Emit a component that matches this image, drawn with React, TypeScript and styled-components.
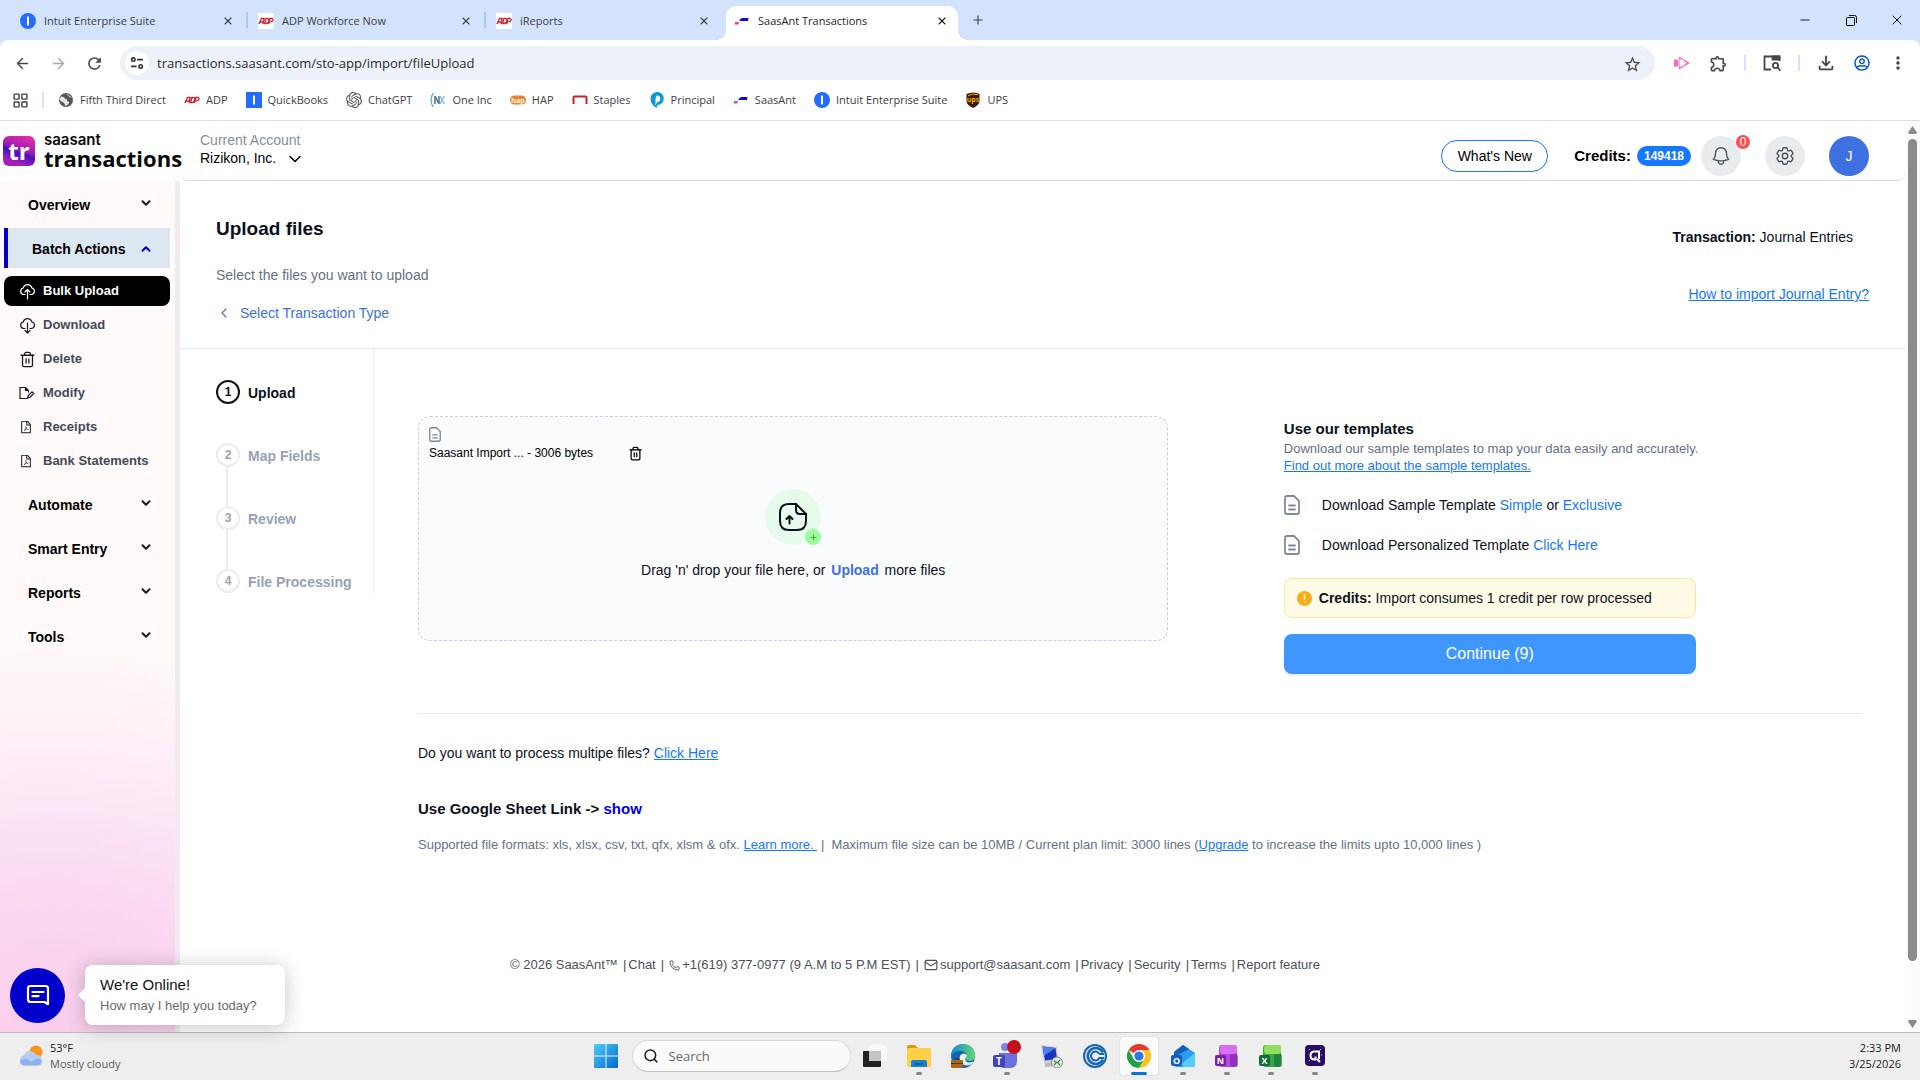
import React from "react";
import styled, { createGlobalStyle, css } from "styled-components";
import {
  ArrowLeft, ArrowRight, ChevronDown, ChevronUp, ChevronLeft, LayoutGrid,
  Mail, Minus, Phone, Plus, Search, Trash2, X,
} from "lucide-react";
import { HiOutlineBell, HiOutlineCog6Tooth } from "react-icons/hi2";
import {
  MdStarBorder, MdOutlineExtension, MdOutlineFileDownload, MdMoreVert, MdRefresh,
} from "react-icons/md";
import { AiOutlineFilePdf } from "react-icons/ai";
import { FaRegUserCircle } from "react-icons/fa";
import { SiOpenai } from "react-icons/si";

const ui = `"Open Sans", "Noto Sans", sans-serif`;
const sans = `"Liberation Sans", Arial, sans-serif`;

const Global = createGlobalStyle`
  * { box-sizing: border-box; }
  body { margin: 0; background: #fff; font-family: ${sans}; font-size: 14px; line-height: 20px; color: #0c111b; }
  button, input, select { font: inherit; color: inherit; margin: 0; padding: 0; border: 0; background: none; }
  button { cursor: pointer; }
  a { color: inherit; text-decoration: none; }
  svg { display: block; flex: none; }
  h1, h2, p, ul, ol { margin: 0; padding: 0; }
  ul, ol { list-style: none; }
`;

const Screen = styled.div`
  display: flex;
  flex-direction: column;
  min-height: 100vh;
`;

/* ---------- browser window ---------- */

const Browser = styled.header`
  font-family: ${ui};
  font-size: 11px;
  background: #d3e2fd;
  color: #3c4043;
`;
const TabStrip = styled.div`
  display: flex;
  align-items: flex-end;
  height: 40px;
  padding-left: 12px;
`;
const Tab = styled.div<{ $active?: boolean; $divider?: boolean }>`
  position: relative;
  display: flex;
  align-items: center;
  gap: 8px;
  width: 232px;
  height: 34px;
  padding: 0 8px 5px;
  margin-right: 6px;
  ${(p) => p.$divider && css`
    &::after { content: ""; position: absolute; right: -4px; top: 6px; width: 2px; height: 16px; background: #a8c7fa; }
  `}
  ${(p) => p.$active && css`
    background: #fff;
    color: #1f1f1f;
    border-radius: 10px 10px 0 0;
    &::before, &::after { content: ""; position: absolute; bottom: 0; width: 10px; height: 10px; }
    &::before { left: -10px; background: radial-gradient(circle at 0 0, transparent 10px, #fff 10px); }
    &::after { right: -10px; background: radial-gradient(circle at 100% 0, transparent 10px, #fff 10px); }
  `}
`;
const TabLabel = styled.button`
  display: flex;
  align-items: center;
  gap: 8px;
  flex: 1;
  text-align: left;
`;
const IconButton = styled.button`
  display: grid;
  place-items: center;
  width: 16px;
  height: 16px;
  color: inherit;
`;
const NewTab = styled(IconButton)`
  width: 28px;
  height: 34px;
  padding-bottom: 6px;
`;
const WindowButtons = styled.div`
  display: flex;
  margin-left: auto;
  color: #000;
  button { width: 46px; height: 40px; }
`;
const Toolbar = styled.div`
  display: flex;
  align-items: center;
  height: 40px;
  padding: 6px 4px 0 4px;
  background: #fff;
  border-radius: 8px 8px 0 0;
  color: #474747;
`;
const ToolButton = styled.button<{ $dim?: boolean }>`
  display: grid;
  place-items: center;
  width: 36px;
  height: 34px;
  color: ${(p) => (p.$dim ? "#a9a9a9" : "inherit")};
`;
const AddressBar = styled.div`
  display: flex;
  align-items: center;
  gap: 8px;
  flex: 1;
  height: 34px;
  margin: 0 9px 0 8px;
  padding: 0 16px 0 5px;
  border-radius: 17px;
  background: #edf1fa;
`;
const SiteInfo = styled.button`
  display: grid;
  place-items: center;
  width: 24px;
  height: 24px;
  border-radius: 12px;
  background: #fff;
`;
const Address = styled.input`
  flex: 1;
  font-size: 13px;
  color: #2b2b2b;
  outline: none;
`;
const Split = styled.span<{ $gap?: number }>`
  width: 2px;
  height: 16px;
  margin: 0 ${(p) => p.$gap ?? 8}px;
  background: #d3e2fd;
`;
const Bookmarks = styled.nav`
  display: flex;
  align-items: center;
  height: 41px;
  padding-left: 12px;
  background: #fff;
  border-bottom: 1px solid #dfdfdf;
`;
const BookmarkList = styled.ul`
  display: flex;
  gap: 18px;
  a { display: flex; align-items: center; gap: 6px; }
`;

/* ---------- app frame ---------- */

const Viewport = styled.div`
  position: relative;
  display: flex;
  flex: 1;
`;
const Frame = styled.div`
  display: grid;
  grid-template-columns: 180px 1fr;
  grid-template-rows: 60px 1fr;
  flex: 1;
`;
const Brand = styled.a`
  display: flex;
  align-items: center;
  gap: 9px;
  padding-left: 3px;
`;
const BrandMark = styled.span`
  display: grid;
  place-items: center;
  flex: none;
  width: 32px;
  height: 30px;
  border-radius: 6px;
  background: linear-gradient(200deg, #e72bb0 5%, #9a1fb0 45%, #4310c0 55%, #a420b8 80%);
  color: #fff;
  font: 700 24px/24px ${ui};
`;
const BrandText = styled.span`
  display: flex;
  flex-direction: column;
  font: 700 22px/22px ${ui};
  color: #0a0a0a;
`;
const BrandTop = styled.span`
  font: 600 15px/14px "Inter", sans-serif;
`;
const TopBar = styled.header`
  display: flex;
  align-items: center;
  padding: 0 36px 0 20px;
  border-bottom: 1px solid #d8dadd;
  border-radius: 0 0 8px 8px;
`;
const Account = styled.label`
  display: flex;
  flex-direction: column;
  align-items: flex-start;
  padding-bottom: 3px;
  line-height: 18px;
  color: #868e9a;
`;
const AccountPicker = styled.span`
  display: flex;
  position: relative;
  color: #000;
  select { appearance: none; padding-right: 28px; outline: none; }
  svg { position: absolute; right: 0; top: 0; pointer-events: none; }
`;
const TopActions = styled.div`
  display: flex;
  align-items: center;
  margin-left: auto;
  padding-top: 10px;
`;
const WhatsNew = styled.button`
  width: 107px;
  height: 32px;
  margin-right: 26px;
  border: 1px solid #1677ff;
  border-radius: 16px;
  color: #000;
`;
const CreditLabel = styled.strong`
  font-size: 15px;
  color: #000;
`;
const CreditPill = styled.span`
  margin: 0 10px 0 6px;
  padding: 0 7px;
  border-radius: 10px;
  background: #1677ff;
  color: #fff;
  font-size: 12px;
  font-weight: 700;
`;
const RoundButton = styled.button<{ $avatar?: boolean }>`
  position: relative;
  display: grid;
  place-items: center;
  width: 40px;
  height: 40px;
  border-radius: 20px;
  background: ${(p) => (p.$avatar ? "#3d70e0" : "#e9ecef")};
  color: ${(p) => (p.$avatar ? "#fff" : "#49515c")};
  & + & { margin-left: 24px; }
`;
const Badge = styled.span`
  position: absolute;
  right: -9px;
  top: -1px;
  width: 14px;
  height: 14px;
  border-radius: 7px;
  background: #ff4d4f;
  color: #fff;
  font-size: 12px;
  line-height: 14px;
`;

/* ---------- side navigation ---------- */

const Sidebar = styled.nav`
  display: flex;
  flex-direction: column;
  padding: 1px 5px 0 4px;
  border-right: 5px solid #f3ebf3;
  background: radial-gradient(ellipse 300% 45% at 30% 100%, #f9cdec 0%, #fad8f0 35%, #fdeef7 75%, #fff9f9 100%) #fff9f9;
`;
const Group = styled.button<{ $open?: boolean }>`
  display: flex;
  align-items: center;
  justify-content: space-between;
  height: 40px;
  margin: 2px 0;
  padding: 2px 17px 0 24px;
  font-weight: 700;
  color: #000;
  svg { margin-bottom: 4px; color: #1d1d1d; }
  ${(p) => p.$open && css`
    border-left: 4px solid #0000c8;
    background: #dde7f1;
    svg { margin-bottom: 0; color: #0000c8; }
  `}
`;
const SubMenu = styled.ul`
  display: flex;
  flex-direction: column;
  gap: 4px;
  padding: 6px 0;
`;
const SubLink = styled.a<{ $current?: boolean }>`
  display: flex;
  align-items: center;
  gap: 7px;
  height: 30px;
  padding-left: 15px;
  border-radius: 8px;
  font-size: 13px;
  font-weight: 700;
  color: ${(p) => (p.$current ? "#fff" : "#434a57")};
  background: ${(p) => (p.$current ? "#000" : "none")};
  span { width: 17px; color: ${(p) => (p.$current ? "#fff" : "#16181d")}; }
`;

/* ---------- page ---------- */

const Page = styled.main`
  min-width: 0;
`;
const PageHead = styled.section`
  display: flex;
  justify-content: space-between;
  padding: 34px 36px 25px;
  border-bottom: 1px solid #e9edf1;
`;
const HeadSide = styled.div`
  display: flex;
  flex-direction: column;
  align-items: flex-end;
  gap: 37px;
  padding-top: 12px;
  p { padding-right: 16px; }
`;
const Title = styled.h1`
  font-size: 19px;
  line-height: 28px;
`;
const Muted = styled.p`
  margin: 22px 0 18px;
  color: #667085;
`;
const BackLink = styled.a`
  display: flex;
  align-items: center;
  gap: 8px;
  color: #3d70e0;
`;
const Link = styled.a<{ $plain?: boolean }>`
  color: #1677ff;
  text-decoration: ${(p) => (p.$plain ? "none" : "underline")};
`;
const Work = styled.div`
  display: flex;
  align-items: flex-start;
  padding-right: 44px;
`;
const Steps = styled.ol`
  width: 194px;
  flex: none;
  padding: 31px 0 0 36px;
  border-right: 1px solid #e9edf1;
`;
const Step = styled.li<{ $active?: boolean }>`
  display: flex;
  gap: 8px;
  position: relative;
  height: 24px;
  line-height: 26px;
  font-weight: 700;
  color: ${(p) => (p.$active ? "#0c111b" : "#98a2b3")};
  & + & { margin-top: 39px; }
  & + &::before {
    content: ""; position: absolute; left: 10px; top: -39px; width: 2px; height: 39px; background: #e9edf1;
  }
`;
const StepDot = styled.span<{ $active?: boolean }>`
  width: 24px;
  height: 24px;
  border: 2px solid ${(p) => (p.$active ? "#0c111b" : "#e9edf1")};
  border-radius: 12px;
  font-size: 12px;
  line-height: 20px;
  text-align: center;
`;
const Content = styled.div`
  flex: 1;
  min-width: 0;
  padding: 67px 0 0 44px;
`;
const Columns = styled.div`
  display: grid;
  grid-template-columns: 52% 412px;
  column-gap: 8%;
  align-items: start;
  padding-bottom: 39px;
  border-bottom: 1px solid #e9e9eb;
`;
const DropZone = styled.section`
  height: 225px;
  padding: 10px;
  border: 1px dashed #c9d1db;
  border-radius: 12px;
  background: #fafbfd;
`;
const FileRow = styled.div`
  display: flex;
  align-items: center;
  gap: 34px;
  margin-top: 2px;
  font-size: 12px;
  line-height: 18px;
  color: #000;
`;
const DropBody = styled.div`
  display: flex;
  flex-direction: column;
  align-items: center;
  gap: 15px;
  margin-top: 27px;
`;
const DropIcon = styled.span`
  position: relative;
  display: grid;
  place-items: center;
  width: 56px;
  height: 56px;
  border-radius: 28px;
  background: #e6fbe9;
`;
const PlusBadge = styled.span`
  position: absolute;
  right: 0;
  bottom: 0;
  display: grid;
  place-items: center;
  width: 16px;
  height: 16px;
  border-radius: 8px;
  background: #9dfb9f;
  color: #3f8a46;
`;
const UploadButton = styled.button`
  margin: 0 2px;
  font-weight: 700;
  color: #3d70e0;
`;
const Aside = styled.aside`
  padding-top: 2px;
`;
const AsideTitle = styled.h2`
  font-size: 15px;
  line-height: 22px;
`;
const AsideText = styled.p`
  margin-bottom: 21px;
  font-size: 13px;
  line-height: 17px;
  white-space: nowrap;
  color: #667085;
`;
const Template = styled.p`
  display: flex;
  gap: 22px;
  height: 20px;
  margin-bottom: 20px;
`;
const Notice = styled.p`
  display: flex;
  align-items: center;
  gap: 7px;
  height: 40px;
  margin: 23px 0 16px;
  padding-left: 12px;
  border: 1px solid #ffe58f;
  border-radius: 8px;
  background: #fffbe6;
`;
const Continue = styled.button`
  width: 100%;
  height: 40px;
  border-radius: 8px;
  background: #4096ff;
  box-shadow: 0 2px 0 rgba(5, 145, 255, 0.1);
  color: #fff;
  font-size: 16px;
`;
const Multi = styled.p`
  margin: 29px 0 35px;
`;
const SheetTitle = styled.h2`
  font-size: 15px;
  line-height: 22px;
  button { color: #0000ee; font-weight: 700; }
`;
const Limits = styled.p`
  margin-top: 15px;
  font-size: 13px;
  color: #667085;
  white-space: pre-wrap;
`;
const Footer = styled.footer`
  display: flex;
  gap: 5px;
  padding: 100px 0 0 330px;
  font-size: 13px;
  color: #4b5157;
  a, span { display: flex; align-items: center; gap: 2px; }
`;

/* ---------- scroll bar, chat, task bar ---------- */

const ScrollTrack = styled.div`
  display: flex;
  flex-direction: column;
  align-items: center;
  gap: 5px;
  width: 15px;
  padding: 5px 0 4px;
  background: #fcfcfc;
  color: #8b8b8b;
`;
const Thumb = styled.span`
  flex: 0 0 822px;
  width: 9px;
  margin-bottom: auto;
  border-radius: 5px;
  background: #8b8b8b;
`;
const Chat = styled.div`
  position: absolute;
  left: 10px;
  bottom: 7px;
  display: flex;
  align-items: center;
  gap: 20px;
`;
const ChatButton = styled.button`
  display: grid;
  place-items: center;
  width: 55px;
  height: 55px;
  border-radius: 28px;
  background: #0000cb;
  color: #fff;
`;
const ChatBubble = styled.div`
  position: relative;
  width: 200px;
  height: 60px;
  padding: 9px 15px;
  border-radius: 8px;
  background: #fff;
  box-shadow: 0 2px 20px rgba(0, 0, 0, 0.24);
  font-size: 13px;
  line-height: 21px;
  color: #6b6b6b;
  &::before {
    content: ""; position: absolute; left: -5px; top: 25px; width: 10px; height: 10px;
    background: #fff; transform: rotate(45deg);
  }
  strong { display: block; font-weight: 400; font-size: 15px; color: #111; }
`;
const TaskBar = styled.footer`
  display: grid;
  grid-template-columns: 1fr auto 1fr;
  align-items: center;
  height: 48px;
  padding-bottom: 2px;
  border-top: 1px solid #bcbcbc;
  background: #eee;
  font: 11px/16px ${ui};
  color: #1b1b1b;
`;
const Weather = styled.button`
  display: flex;
  align-items: center;
  gap: 7px;
  padding-left: 19px;
  text-align: left;
  small { display: block; font-size: 11px; color: #5c5c5c; }
`;
const Clock = styled.time`
  padding-right: 19px;
  text-align: right;
`;
const Tray = styled.div`
  display: flex;
  align-items: center;
`;
const Task = styled.button<{ $mark?: "idle" | "active" }>`
  position: relative;
  display: grid;
  place-items: center;
  width: 38px;
  height: 38px;
  margin: 0 3px;
  border-radius: 4px;
  ${(p) => p.$mark === "active" && css`background: #fafafa; box-shadow: 0 0 0 1px #e3e3e3;`}
  ${(p) => p.$mark && css`
    &::after {
      content: ""; position: absolute; bottom: 0; height: 3px; border-radius: 2px;
      width: ${p.$mark === "active" ? 16 : 6}px;
      background: ${p.$mark === "active" ? "#0078d4" : "#868686"};
    }
  `}
`;
const SearchBox = styled.label`
  display: flex;
  align-items: center;
  gap: 10px;
  width: 219px;
  height: 32px;
  margin: 0 2px 0 4px;
  padding-left: 10px;
  border: 1px solid #dadada;
  border-bottom-color: #c2c2c2;
  border-radius: 16px;
  background: #fafafa;
  input { width: 150px; font-size: 13px; outline: none; }
  input::placeholder { color: #666; opacity: 1; }
`;

/* ---------- small drawings ---------- */

const IntuitIcon = ({ square }: { square?: boolean }) => (
  <svg width="16" height="16" viewBox="0 0 16 16">
    <rect width="16" height="16" rx={square ? 0 : 8} fill="#236cff" />
    <rect x="7" y="3.500" width="2" height="9" fill="#fff" />
  </svg>
);
const AdpIcon = () => (
  <svg width="16" height="16" viewBox="0 0 16 16">
    <rect width="16" height="16" fill="#fff" />
    <g fill="none" stroke="#d0202e" strokeWidth="1.300" strokeLinejoin="round">
      <path d="M.8 11 3.500 5.500h2.700L5 11M2.300 9h3" />
      <path d="M6.600 10.500 7.900 5.500h1.300c2.800 0 1.800 5-1.200 5z" />
      <path d="M10.500 11 11.800 5.500h2c2.200 0 1.500 3.300-1 3.300h-1.500" />
    </g>
  </svg>
);
const SaasAntIcon = () => (
  <svg width="16" height="16" viewBox="0 0 16 16">
    <path d="M6 6.500 8 5h6.500L14 8H5.500z" fill="#1209c9" />
    <path d="M1 9h4l-.8 2.500H.8z" fill="#e83fb4" />
  </svg>
);
const GlobeIcon = () => (
  <svg width="16" height="16" viewBox="0 0 16 16">
    <circle cx="8" cy="8" r="7" fill="#55595d" />
    <path d="M3 4.500c2 .5 3 .2 3.500 1.500S9 6.500 9 8.300 11.500 9 11 11 8.500 12.500 8 14c-1.500-.3-1-3-2.500-3.500S1.500 8 1.500 7zM9 1.800c0 1.800 1.700 1.400 2.200 2.700s2 1 2.900 1.200" fill="#fff" opacity=".85" />
  </svg>
);
const OneIncIcon = () => (
  <svg width="16" height="16" viewBox="0 0 16 16" fill="none" strokeWidth="1.500">
    <path d="M3.500 1C.3 5 .3 11 3.500 15" stroke="#6eb5dc" />
    <path d="M5 12V4l4 8V4" stroke="#50708c" />
    <path d="m10 4 4.500 8M14.500 4 10 12" stroke="#8ebcd6" />
  </svg>
);
const HapIcon = () => (
  <svg width="16" height="16" viewBox="0 0 16 16">
    <rect y="3.500" width="16" height="9" rx="4.500" fill="#ef8127" />
    <text x="8" y="10.600" fontSize="7" fontWeight="700" fill="#fff" textAnchor="middle" fontFamily="Open Sans">hap</text>
  </svg>
);
const StaplesIcon = () => (
  <svg width="16" height="16" viewBox="0 0 16 16">
    <path d="M1.500 12V5.500q0-1 1-1h11q1 0 1 1V12" fill="none" stroke="#c8202f" strokeWidth="2" />
  </svg>
);
const PrincipalIcon = () => (
  <svg width="16" height="16" viewBox="0 0 16 16">
    <path d="M8 0a6.500 6.500 0 0 1 .5 13L7.500 16Q2 13 1.500 7 2 .5 8 0z" fill="#0799d1" />
    <path d="M8 3.500a3.200 3.200 0 1 1 0 6.500L6.500 14V7q0-2.500 1.500-3.500z" fill="#fff" />
  </svg>
);
const UpsIcon = () => (
  <svg width="16" height="16" viewBox="0 0 16 16">
    <path d="M1.500 2Q8-1 14.500 2v7q0 4-6.500 7-6.500-3-6.500-7z" fill="#3b1c0a" />
    <path d="M3 3.800Q7 .8 13 2.800" stroke="#f5a800" fill="none" />
    <text x="8" y="10" fontSize="7" fontWeight="700" fill="#f5a800" textAnchor="middle" fontFamily="Open Sans">ups</text>
  </svg>
);
const TuneIcon = () => (
  <svg width="14" height="14" viewBox="0 0 14 14" fill="none" stroke="#333" strokeWidth="1.600">
    <circle cx="3.300" cy="3.600" r="1.700" /><path d="M7 3.600h6M1 10.400h5.500" /><circle cx="10.700" cy="10.400" r="1.700" />
  </svg>
);
const PinkIcon = () => (
  <svg width="16" height="16" viewBox="0 0 16 16">
    <path d="M0 4.500h4v7H0z" fill="#ff6ac1" />
    <path fillRule="evenodd" d="M5 1.500 16 8 5 14.500v-3h3.500l4-3.500-4-3.500H5z" fill="#ff6ac1" />
    <path d="M5 4.500v7" stroke="#ff6ac1" strokeWidth="1" />
  </svg>
);
const PanelIcon = () => (
  <svg width="18" height="18" viewBox="0 0 18 18" fill="none" stroke="#474747" strokeWidth="1.800">
    <path d="M8 15.500H1.500v-13h15V7" /><path d="M9.500 2.500h7v3h-7z" fill="#474747" /><circle cx="12.500" cy="11.500" r="2.600" /><path d="m14.500 13.500 3 3.200" />
  </svg>
);
const RestoreIcon = () => (
  <svg width="11" height="11" viewBox="0 0 11 11" fill="none" stroke="#000">
    <rect x=".5" y="2.500" width="8" height="8" rx="1" /><path d="M3 .5h5.500q2 0 2 2V8" />
  </svg>
);
const CloudIcon = ({ down }: { down?: boolean }) => (
  <svg width="17" height="17" viewBox="0 0 17 17" fill="none" stroke="currentColor" strokeWidth="1.200" strokeLinecap="round" strokeLinejoin="round">
    <path d="M6 11.500H5a3.300 3.300 0 0 1-.8-6.500 4.500 4.500 0 0 1 8.700 0 3.300 3.300 0 0 1-.6 6.500H11" />
    <path d={down ? "M8.500 6v10M6 13.500 8.500 16l2.500-2.500" : "M8.500 16V6.500M6 9l2.500-2.500L11 9"} />
  </svg>
);
const ModifyIcon = () => (
  <svg width="16" height="16" viewBox="0 0 16 16" fill="none" stroke="currentColor" strokeWidth="1.200">
    <path d="M8 13.500H1v-11h5.500L9.500 5.500v2M6.500 2.500v3h3M8.500 13l.8-2.500 3.700-3.700 1.700 1.700L11 12.200z" />
  </svg>
);
const DocIcon = ({ width }: { width: number }) => (
  <svg width={width} height={width * 1.25} viewBox="0 0 16 20" fill="none" stroke="#808b99" strokeWidth="1.800" strokeLinecap="round" strokeLinejoin="round">
    <path d="M10 1H3Q1 1 1 3v14q0 2 2 2h10q2 0 2-2V6zM5 10.500h6M5 14.500h6" />
  </svg>
);
const DocUploadIcon = () => (
  <svg width="30" height="30" viewBox="0 0 30 30" fill="none" stroke="#0c111b" strokeWidth="2" strokeLinecap="round" strokeLinejoin="round">
    <path d="M28 12v7q0 9-9 9h-8q-9 0-9-9v-8q0-9 9-9h7" /><path d="M28 12h-6q-4 0-4-4V2z" /><path d="M11.500 21.500v-7.500M8.500 17l3-3 3 3" />
  </svg>
);
const NoticeIcon = () => (
  <svg width="15" height="15" viewBox="0 0 14 14">
    <circle cx="7" cy="7" r="7" fill="#faad14" /><path d="M7 3v5M7 9.500v1.400" stroke="#fff7d8" strokeWidth="1.400" />
  </svg>
);
const ChatIcon = () => (
  <svg width="24" height="24" viewBox="0 0 24 24" fill="none" stroke="currentColor" strokeWidth="2.200" strokeLinejoin="round" strokeLinecap="round">
    <path d="M4.500 3h15Q22 3 22 5.500v15.700L18.500 19h-14Q2 19 2 16.500v-11Q2 3 4.500 3zM6.500 9h11M6.500 13.200h6" />
  </svg>
);
const Triangle = ({ down }: { down?: boolean }) => (
  <svg width="9" height="8" viewBox="0 0 9 8"><path d={down ? "M0 1.500 1 0h7l1 1.500L4.500 8z" : "M0 6.500 1 8h7l1-1.500L4.500 0z"} fill="currentColor" /></svg>
);
const WeatherIcon = () => (
  <svg width="24" height="24" viewBox="0 0 24 24">
    <circle cx="17" cy="8" r="6.500" fill="#f7931e" />
    <path d="M5.500 21.500a5 5 0 0 1-.5-9.900A6.500 6.500 0 0 1 17 11a5.300 5.300 0 0 1 1.500 10.500z" fill="#b4cdf7" />
    <path d="M5.500 21.500c-6 0-6-7 .5-7 4 0 3 3 6 3s4-4 7.500-3 4.500 7-1 7z" fill="#8db1ee" />
  </svg>
);
const WindowsIcon = () => (
  <svg width="24" height="24" viewBox="0 0 24 24">
    <defs><linearGradient id="win" x2="1" y2="1"><stop stopColor="#4fcdf8" /><stop offset="1" stopColor="#0069d0" /></linearGradient></defs>
    <path d="M1 0h10.500v11.500H0V1q0-1 1-1zM12.500 0H23q1 0 1 1v10.500H12.500zM0 12.500h11.500V24H1q-1 0-1-1zM12.500 12.500H24V23q0 1-1 1H12.500z" fill="url(#win)" />
  </svg>
);
const TaskViewIcon = () => (
  <svg width="24" height="24" viewBox="0 0 24 24">
    <rect x="6" y="1" width="18" height="16" rx="1" fill="#f8f8f8" /><rect y="7" width="18" height="16" rx="1" fill="#222" /><rect x="6" y="7" width="12" height="10" fill="#c4c4c4" />
  </svg>
);
const FolderIcon = () => (
  <svg width="24" height="24" viewBox="0 0 24 24">
    <path d="M0 3q0-2 2-2h6l3 3v4H0z" fill="#dd9a10" /><rect y="4" width="24" height="19" rx="1.500" fill="#ffcf48" /><path d="M4 23v-5q0-2 2-2h12q2 0 2 2v5z" fill="#1680d0" /><path d="M8 20h8" stroke="#0b5797" strokeWidth="1.500" />
  </svg>
);
const EdgeIcon = () => (
  <svg width="24" height="24" viewBox="0 0 24 24">
    <defs><linearGradient id="edg" x2="1"><stop stopColor="#1687d9" /><stop offset="1" stopColor="#5fdb6a" /></linearGradient></defs>
    <circle cx="12" cy="12" r="12" fill="#1163b4" />
    <path d="M0 12A12 12 0 0 1 24 12q0 5-6 5-4 0-4-2.500 2-1 2-3Q15 7 9 7q-6 0-9 5z" fill="url(#edg)" />
    <path d="M14 14.500q2-1 2-3Q14 8 10 10.500 7 14 10 19q4 4 10 1.500 2-1 2.500-3-8 3-8.500-3z" fill="#eeeeee" />
    <rect y="16" width="12" height="8" rx="1" fill="#a9671b" /><path d="M4 16v-1.500h4V16M0 19.500h12" stroke="#5e3305" fill="none" />
  </svg>
);
const TeamsIcon = () => (
  <svg width="28" height="32" viewBox="0 0 28 32">
    <circle cx="12" cy="7" r="4" fill="#7b83eb" /><path d="M6 13h18v8q0 6-6 7H9q-3-3-3-7z" fill="#6b70e0" />
    <rect y="15" width="12" height="12" rx="2" fill="#4046b5" />
    <text x="6" y="24.500" fontSize="10" fontWeight="700" fill="#fff" textAnchor="middle" fontFamily="Open Sans">T</text>
    <circle cx="21" cy="7" r="7" fill="#c50f1f" />
  </svg>
);
const RemoteIcon = () => (
  <svg width="24" height="24" viewBox="0 0 24 24">
    <path d="M2 1l16 2 2 14-15 2z" fill="#d0d0cc" /><path d="M3.500 2.500l13 1.500 1.500 11-12 1.500z" fill="#1634c4" /><path d="M3.500 2.500l13 1.500L5 12z" fill="#4f7cf0" /><path d="M6 19l10-1 2 4-12 1z" fill="#bbb" />
    <circle cx="18" cy="18.500" r="5.500" fill="#e5e9e5" stroke="#888" /><path d="m15 16.500 2.500 2-2.500 2.500M21 16l-2.500 2.500L21 21" stroke="#2a9a3a" fill="none" strokeWidth="1.300" />
  </svg>
);
const CIcon = () => (
  <svg width="24" height="24" viewBox="0 0 24 24" fill="none" stroke="#1266b4">
    <circle cx="12" cy="12" r="11" strokeWidth="2" /><path d="M20 8.500a8 8 0 1 0 0 7" strokeWidth="2.600" /><path d="M16.500 10a4.500 4.500 0 1 0 0 4H21M16.500 10H21" strokeWidth="2" />
  </svg>
);
const ChromeIcon = () => (
  <svg width="24" height="24" viewBox="0 0 24 24">
    <path d="M12 12 1.600 6A12 12 0 0 1 22.400 6z" fill="#e33b2e" />
    <path d="M22.400 6A12 12 0 0 1 12 24l5.200-9z" fill="#fcc31e" /><path d="M12 6h10.400q3 9-5.200 9z" fill="#fcc31e" />
    <path d="M1.600 6 6.800 15 12 18l5.200-3L12 24A12 12 0 0 1 1.600 6z" fill="#22a045" />
    <circle cx="12" cy="12" r="6" fill="#fff" /><circle cx="12" cy="12" r="4.600" fill="#2f75e4" />
  </svg>
);
const OfficeIcon = ({ letter, light, mid, dark }: { letter: string; light: string; mid: string; dark: string }) => (
  <svg width="24" height="24" viewBox="0 0 24 24">
    <rect x="4" y="1" width="18" height="22" rx="3" fill={mid} /><rect x="5" y="1" width="17" height="9" rx="3" fill={light} /><rect x="15" y="10" width="8" height="13" rx="2" fill={dark} opacity=".6" />
    <rect y="11" width="11" height="11" rx="2" fill={dark} />
    <text x="5.500" y="19.800" fontSize="9" fontWeight="700" fill="#fff" textAnchor="middle" fontFamily="Open Sans">{letter}</text>
  </svg>
);
const OutlookIcon = () => (
  <svg width="24" height="24" viewBox="0 0 24 24">
    <path d="M12 1 24 9v11q0 3-3 3H6q-3 0-3-3V8z" fill="#2f9bf0" /><path d="M12 1 3 8v5l15-8z" fill="#1260b8" /><path d="M24 9 10 20l3 3h8q3 0 3-3z" fill="#53cdf9" />
    <rect y="11" width="11" height="11" rx="2" fill="#0f5fc0" />
    <text x="5.500" y="19.800" fontSize="9" fontWeight="700" fill="#fff" textAnchor="middle" fontFamily="Open Sans">O</text>
  </svg>
);
const PurpleIcon = () => (
  <svg width="20" height="21" viewBox="0 0 20 21">
    <rect width="20" height="21" rx="4" fill="#2a0c66" /><path d="M14 14V6.500H9.500q-4 0-4 4t4 4h1v-3M12 14l3 3" stroke="#fff" strokeWidth="2" fill="none" /><path d="M4 4l1 1M16 4l-1 1M16 10h1M4 16l1-1" stroke="#cba8ff" />
  </svg>
);

/* ---------- data ---------- */

const tabs = [
  { label: "Intuit Enterprise Suite", icon: <IntuitIcon />, divider: true },
  { label: "ADP Workforce Now", icon: <AdpIcon />, divider: true },
  { label: "iReports", icon: <AdpIcon /> },
  { label: "SaasAnt Transactions", icon: <SaasAntIcon />, active: true },
];
const bookmarks: [string, React.ReactNode][] = [
  ["Fifth Third Direct", <GlobeIcon />],
  ["ADP", <AdpIcon />],
  ["QuickBooks", <IntuitIcon square />],
  ["ChatGPT", <SiOpenai size={16} color="#555" />],
  ["One Inc", <OneIncIcon />],
  ["HAP", <HapIcon />],
  ["Staples", <StaplesIcon />],
  ["Principal", <PrincipalIcon />],
  ["SaasAnt", <SaasAntIcon />],
  ["Intuit Enterprise Suite", <IntuitIcon />],
  ["UPS", <UpsIcon />],
];
const batch: [string, React.ReactNode][] = [
  ["Bulk Upload", <CloudIcon />],
  ["Download", <CloudIcon down />],
  ["Delete", <Trash2 size={17} strokeWidth={1.8} />],
  ["Modify", <ModifyIcon />],
  ["Receipts", <AiOutlineFilePdf size={14} />],
  ["Bank Statements", <AiOutlineFilePdf size={14} />],
];
const steps = ["Upload", "Map Fields", "Review", "File Processing"];

export default function App() {
  return (
    <Screen>
      <Global />
      <Browser>
        <TabStrip>
          {tabs.map((t) => (
            <Tab key={t.label} $active={t.active} $divider={t.divider}>
              <TabLabel>{t.icon}{t.label}</TabLabel>
              <IconButton aria-label={`Close ${t.label}`}><X size={12} strokeWidth={2.2} /></IconButton>
            </Tab>
          ))}
          <NewTab aria-label="New tab"><Plus size={14} /></NewTab>
          <WindowButtons>
            <IconButton aria-label="Minimize"><Minus size={14} strokeWidth={1.5} /></IconButton>
            <IconButton aria-label="Restore"><RestoreIcon /></IconButton>
            <IconButton aria-label="Close window"><X size={16} strokeWidth={1.4} /></IconButton>
          </WindowButtons>
        </TabStrip>
        <Toolbar>
          <ToolButton aria-label="Back"><ArrowLeft size={17} /></ToolButton>
          <ToolButton aria-label="Forward" $dim><ArrowRight size={17} /></ToolButton>
          <ToolButton aria-label="Reload"><MdRefresh size={19} /></ToolButton>
          <AddressBar>
            <SiteInfo aria-label="Site information"><TuneIcon /></SiteInfo>
            <Address aria-label="Address" defaultValue="transactions.saasant.com/sto-app/import/fileUpload" />
            <IconButton aria-label="Bookmark this page"><MdStarBorder size={19} /></IconButton>
          </AddressBar>
          <ToolButton aria-label="Recorder extension"><PinkIcon /></ToolButton>
          <ToolButton aria-label="Extensions"><MdOutlineExtension size={19} /></ToolButton>
          <Split />
          <ToolButton aria-label="Search side panel"><PanelIcon /></ToolButton>
          <Split />
          <ToolButton aria-label="Downloads"><MdOutlineFileDownload size={22} /></ToolButton>
          <ToolButton aria-label="Profile"><FaRegUserCircle size={16} color="#0b57d0" /></ToolButton>
          <ToolButton aria-label="Menu"><MdMoreVert size={20} /></ToolButton>
        </Toolbar>
        <Bookmarks aria-label="Bookmarks">
          <IconButton aria-label="Apps"><LayoutGrid size={17} /></IconButton>
          <Split $gap={14} />
          <BookmarkList>
            {bookmarks.map(([label, icon]) => (
              <li key={label}><a href="#">{icon}{label}</a></li>
            ))}
          </BookmarkList>
        </Bookmarks>
      </Browser>

      <Viewport>
        <Frame>
          <Brand href="#">
            <BrandMark>tr</BrandMark>
            <BrandText><BrandTop>saasant</BrandTop>transactions</BrandText>
          </Brand>
          <TopBar>
            <Account>
              Current Account
              <AccountPicker>
                <select defaultValue="Rizikon, Inc."><option>Rizikon, Inc.</option></select>
                <ChevronDown size={20} strokeWidth={1.8} />
              </AccountPicker>
            </Account>
            <TopActions>
              <WhatsNew>What's New</WhatsNew>
              <CreditLabel>Credits:</CreditLabel>
              <CreditPill>149418</CreditPill>
              <RoundButton aria-label="Notifications"><HiOutlineBell size={22} /><Badge>0</Badge></RoundButton>
              <RoundButton aria-label="Settings"><HiOutlineCog6Tooth size={22} /></RoundButton>
              <RoundButton $avatar>J</RoundButton>
            </TopActions>
          </TopBar>

          <Sidebar aria-label="Main">
            <Group>Overview<ChevronDown size={14} strokeWidth={3.5} /></Group>
            <Group $open>Batch Actions<ChevronUp size={14} strokeWidth={3.5} /></Group>
            <SubMenu>
              {batch.map(([label, icon], i) => (
                <li key={label}><SubLink href="#" $current={i === 0}><span>{icon}</span>{label}</SubLink></li>
              ))}
            </SubMenu>
            {["Automate", "Smart Entry", "Reports", "Tools"].map((g) => (
              <Group key={g}>{g}<ChevronDown size={14} strokeWidth={3.5} /></Group>
            ))}
          </Sidebar>

          <Page>
            <PageHead>
              <div>
                <Title>Upload files</Title>
                <Muted>Select the files you want to upload</Muted>
                <BackLink href="#"><ChevronLeft size={16} strokeWidth={1.6} />Select Transaction Type</BackLink>
              </div>
              <HeadSide>
                <p><strong>Transaction:</strong> Journal Entries</p>
                <Link href="#">How to import Journal Entry?</Link>
              </HeadSide>
            </PageHead>
            <Work>
              <Steps>
                {steps.map((s, i) => (
                  <Step key={s} $active={i === 0}><StepDot $active={i === 0}>{i + 1}</StepDot>{s}</Step>
                ))}
              </Steps>
              <Content>
                <Columns>
                  <DropZone>
                    <DocIcon width={12} />
                    <FileRow>
                      Saasant Import ... - 3006 bytes
                      <IconButton aria-label="Remove file"><Trash2 size={15} strokeWidth={2} /></IconButton>
                    </FileRow>
                    <DropBody>
                      <DropIcon><DocUploadIcon /><PlusBadge><Plus size={9} /></PlusBadge></DropIcon>
                      <p>Drag 'n' drop your file here, or <UploadButton>Upload</UploadButton> more files</p>
                    </DropBody>
                  </DropZone>
                  <Aside>
                    <AsideTitle>Use our templates</AsideTitle>
                    <AsideText>
                      Download our sample templates to map your data easily and accurately.<br />
                      <Link href="#">Find out more about the sample templates.</Link>
                    </AsideText>
                    <Template><DocIcon width={16} /><span>Download Sample Template <Link $plain href="#">Simple</Link> or <Link $plain href="#">Exclusive</Link></span></Template>
                    <Template><DocIcon width={16} /><span>Download Personalized Template <Link $plain href="#">Click Here</Link></span></Template>
                    <Notice><NoticeIcon /><span><strong>Credits:</strong> Import consumes 1 credit per row processed</span></Notice>
                    <Continue>Continue (9)</Continue>
                  </Aside>
                </Columns>
                <Multi>Do you want to process multipe files? <Link href="#">Click Here</Link></Multi>
                <SheetTitle>Use Google Sheet Link -&gt; <button>show</button></SheetTitle>
                <Limits>
                  {"Supported file formats: xls, xlsx, csv, txt, qfx, xlsm & ofx. "}<Link href="#">{"Learn more. "}</Link>
                  {" |  Maximum file size can be 10MB / Current plan limit: 3000 lines ("}<Link href="#">Upgrade</Link>
                  {" to increase the limits upto 10,000 lines )"}
                </Limits>
              </Content>
            </Work>
            <Footer>
              <span>© 2026 SaasAnt™</span>
              <span>| <a href="#">Chat</a></span>
              <span>|</span>
              <a href="#"><Phone size={11} />+1(619) 377-0977 (9 A.M to 5 P.M EST)</a>
              <span>|</span>
              <a href="#"><Mail size={14} />support@saasant.com</a>
              <span>| <a href="#">Privacy</a></span>
              <span>| <a href="#">Security</a></span>
              <span>| <a href="#">Terms</a></span>
              <span>| <a href="#">Report feature</a></span>
            </Footer>
          </Page>
        </Frame>
        <ScrollTrack><Triangle /><Thumb /><Triangle down /></ScrollTrack>
        <Chat>
          <ChatButton aria-label="Open chat"><ChatIcon /></ChatButton>
          <ChatBubble><strong>We're Online!</strong>How may I help you today?</ChatBubble>
        </Chat>
      </Viewport>

      <TaskBar>
        <Weather><WeatherIcon /><span>53°F<small>Mostly cloudy</small></span></Weather>
        <Tray>
          <Task aria-label="Start"><WindowsIcon /></Task>
          <SearchBox><Search size={16} strokeWidth={2.2} /><input placeholder="Search" /></SearchBox>
          <Task aria-label="Task view"><TaskViewIcon /></Task>
          <Task aria-label="File Explorer" $mark="idle"><FolderIcon /></Task>
          <Task aria-label="Edge"><EdgeIcon /></Task>
          <Task aria-label="Teams" $mark="idle"><TeamsIcon /></Task>
          <Task aria-label="Remote Desktop"><RemoteIcon /></Task>
          <Task aria-label="Client"><CIcon /></Task>
          <Task aria-label="Chrome" $mark="active"><ChromeIcon /></Task>
          <Task aria-label="Outlook" $mark="idle"><OutlookIcon /></Task>
          <Task aria-label="OneNote" $mark="idle"><OfficeIcon letter="N" light="#d76ff0" mid="#b44be0" dark="#7a1fa8" /></Task>
          <Task aria-label="Excel" $mark="idle"><OfficeIcon letter="X" light="#8fe05a" mid="#35a847" dark="#146c36" /></Task>
          <Task aria-label="Capture" $mark="idle"><PurpleIcon /></Task>
        </Tray>
        <Clock>2:33 PM<br />3/25/2026</Clock>
      </TaskBar>
    </Screen>
  );
}
